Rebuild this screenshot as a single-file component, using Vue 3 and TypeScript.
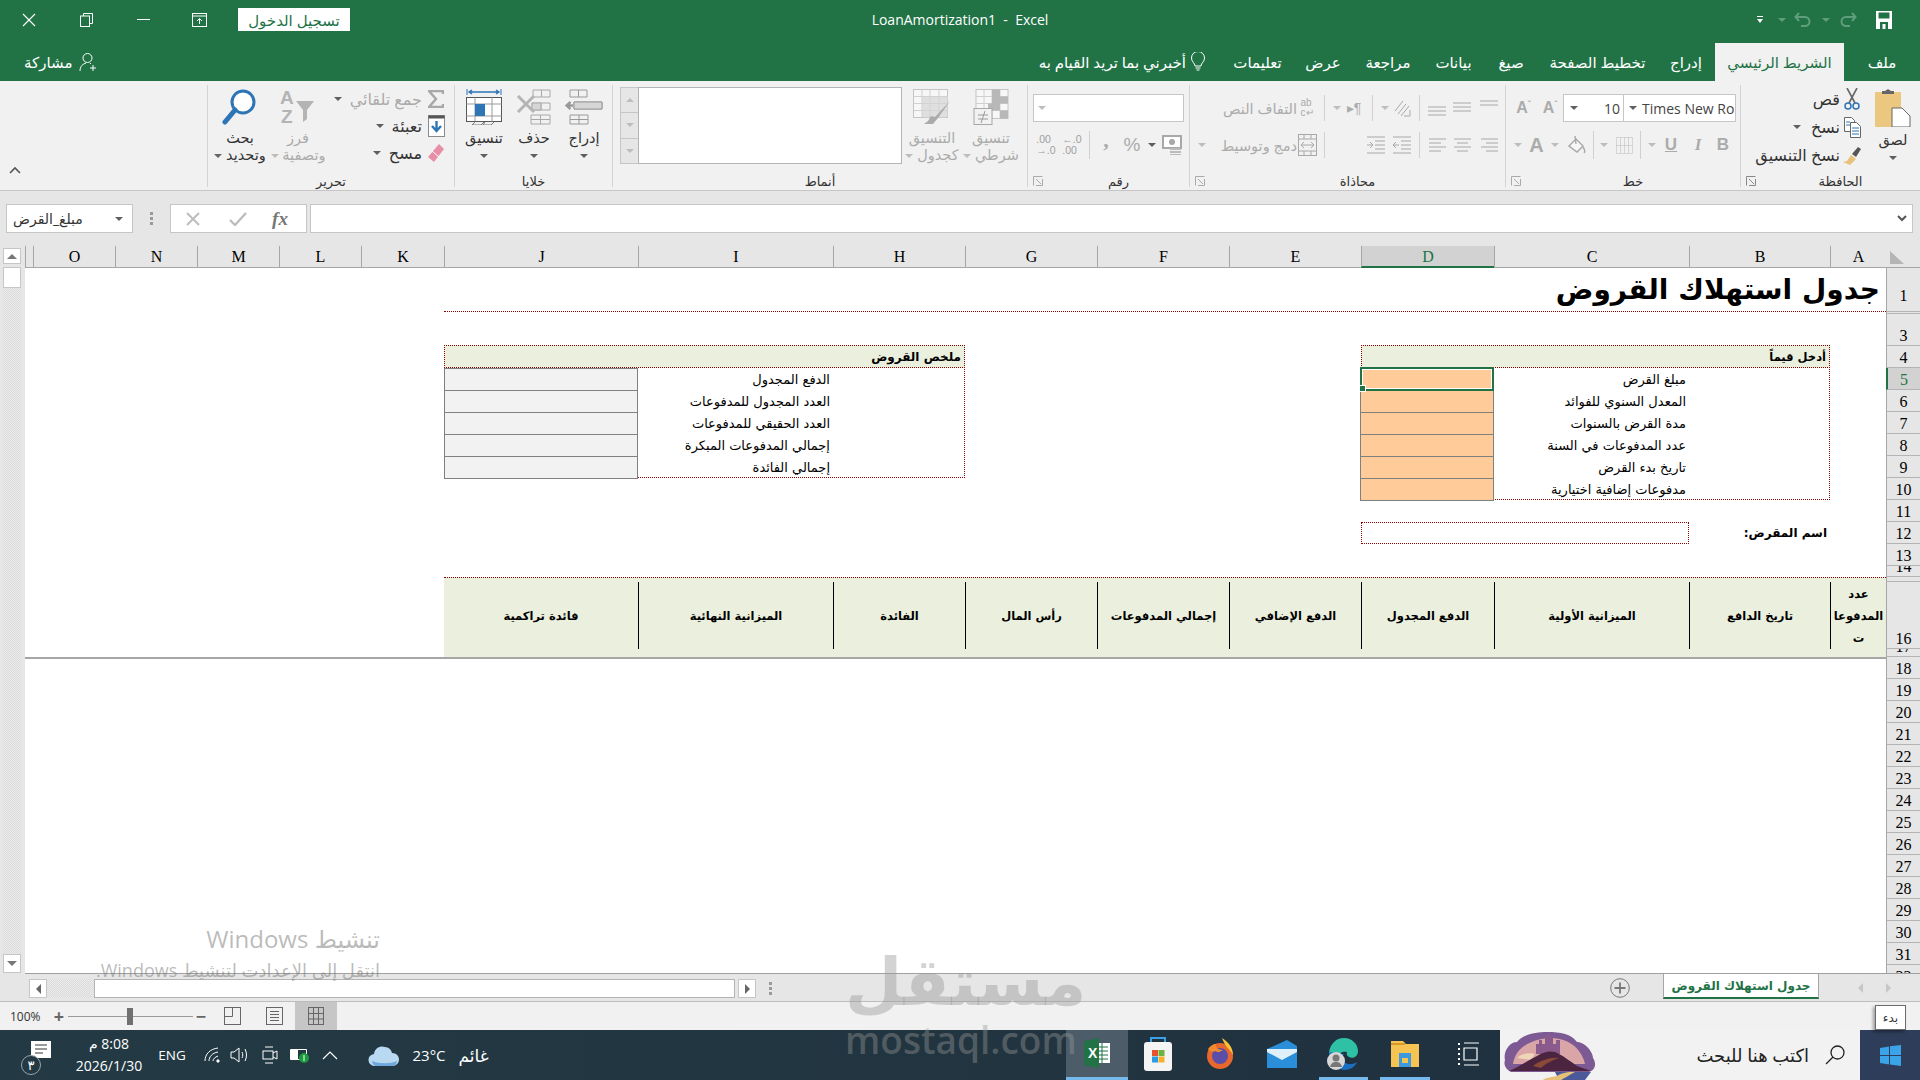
<script setup lang="ts">
interface Cell {
  text?: string;
  row: number;
  col: number;
  rows?: number;
  cols?: number;
  cls: string;
}

const colNames = ['A', 'B', 'C', 'D', 'E', 'F', 'G', 'H', 'I', 'J', 'K', 'L', 'M', 'N', 'O', ''];
const colWidths = [56, 141, 195, 133, 132, 132, 132, 132, 195, 194, 83, 82, 82, 82, 82, 8];
const rowHeights = [
  44, 2, 32, 22, 22, 22, 22, 22, 22, 22, 22, 22, 22, 11, 5, 67, 8, 22, 22, 22, 22, 22, 22, 22, 22,
  22, 22, 22, 22, 22, 22, 22,
];

const gridShape = {
  gridTemplateColumns: `34px ${colWidths.map((w) => w + 'px').join(' ')}`,
  gridTemplateRows: `22px ${rowHeights.map((h) => h + 'px').join(' ')}`,
};

// cells are given in sheet coordinates: A = 1, row 1 = 1
function place(row: number, col: number, rows = 1, cols = 1) {
  return { gridArea: `${row + 1} / ${col + 1} / span ${rows} / span ${cols}` };
}

const inputLabels = [
  'مبلغ القرض',
  'المعدل السنوي للفوائد',
  'مدة القرض بالسنوات',
  'عدد المدفوعات في السنة',
  'تاريخ بدء القرض',
  'مدفوعات إضافية اختيارية',
];
const summaryLabels = [
  'الدفع المجدول',
  'العدد المجدول للمدفوعات',
  'العدد الحقيقي للمدفوعات',
  'إجمالي المدفوعات المبكرة',
  'إجمالي الفائدة',
];
const tableHeads = [
  'عدد المدفوعا ت',
  'تاريخ الدافع',
  'الميزانية الأولية',
  'الدفع المجدول',
  'الدفع الإضافي',
  'إجمالي المدفوعات',
  'رأس المال',
  'الفائدة',
  'الميزانية النهائية',
  'فائدة تراكمية',
];

const cells: Cell[] = [
  { text: 'جدول استهلاك القروض', row: 1, col: 1, cols: 10, cls: 'sheet-title' },
  { row: 4, col: 2, rows: 7, cols: 3, cls: 'dotted-box' },
  { text: 'أدخل قيماً', row: 4, col: 2, cols: 3, cls: 'box-head' },
  ...inputLabels.flatMap((text, i) => [
    { text, row: 5 + i, col: 3, cls: 'label' },
    { row: 5 + i, col: 4, cls: 'input' },
  ]),
  { text: 'اسم المقرض:', row: 12, col: 2, cls: 'borrower' },
  { row: 12, col: 3, cols: 2, cls: 'dotted-cell' },
  { row: 4, col: 8, rows: 6, cols: 3, cls: 'dotted-box' },
  { text: 'ملخص القروض', row: 4, col: 8, cols: 3, cls: 'box-head summary-head' },
  ...summaryLabels.flatMap((text, i) => [
    { text, row: 5 + i, col: 9, cls: 'label' },
    { row: 5 + i, col: 10, cls: 'output' },
  ]),
  { row: 15, col: 1, rows: 3, cols: 10, cls: 'band' },
  ...tableHeads.map((text, i) => ({
    text,
    row: 16,
    col: i + 1,
    cls: i < 9 ? 'thead thead-line' : 'thead',
  })),
  { row: 17, col: 1, cols: 16, cls: 'freeze' },
  { row: 5, col: 4, cls: 'active-cell' },
];

const tabs = [
  { name: 'ملف', width: 76 },
  { name: 'الشريط الرئيسي', width: 129, active: true },
  { name: 'إدراج', width: 58 },
  { name: 'تخطيط الصفحة', width: 119 },
  { name: 'صيغ', width: 54 },
  { name: 'بيانات', width: 61 },
  { name: 'مراجعة', width: 70 },
  { name: 'عرض', width: 60 },
  { name: 'تعليمات', width: 71 },
];
</script>

<template>
  <div class="app">
    <header class="titlebar">
      <div class="win-left">
        <span class="win-btn">
          <svg width="14" height="14" viewBox="0 0 14 14"><path d="M1 1l12 12M13 1L1 13" stroke="#fff" stroke-width="1.1" /></svg>
        </span>
        <span class="win-btn">
          <svg width="13" height="14" viewBox="0 0 13 14" fill="none" stroke="#fff"><path d="M3.5 3V.5h9v10H10" /><rect x=".5" y="3" width="9" height="10.5" /></svg>
        </span>
        <span class="win-btn">
          <svg width="13" height="3" viewBox="0 0 13 3"><path d="M0 1.5h13" stroke="#fff" /></svg>
        </span>
        <span class="win-btn">
          <svg width="15" height="14" viewBox="0 0 15 14" fill="none" stroke="#fff"><rect x=".5" y=".5" width="14" height="13" /><path d="M.5 3h14M7.5 11V5.5M5 8l2.5-2.5L10 8" /></svg>
        </span>
        <button class="signin">تسجيل الدخول</button>
      </div>
      <div class="doc-title">LoanAmortization1&nbsp; - &nbsp;Excel</div>
      <div class="qat">
        <span class="qat-slot q24"><svg width="6" height="8" viewBox="0 0 6 8" fill="#fff"><path d="M0 0h6v1H0zM0 3h6L3 7z" /></svg></span>
        <span class="qat-slot q20"><i class="dd dd-green"></i></span>
        <span class="qat-slot q22">
          <svg width="18" height="18" viewBox="0 0 18 18" fill="none" stroke="#5f9d7d" stroke-width="2"><path d="M5 2L1.5 6 5 10M2 6h9a4.500 4.500 0 0 1 0 9H7" /></svg>
        </span>
        <span class="qat-slot q24"><i class="dd dd-green"></i></span>
        <span class="qat-slot q20">
          <svg width="18" height="18" viewBox="0 0 18 18" fill="none" stroke="#5f9d7d" stroke-width="2"><path d="M13 2l3.500 4L13 10M16 6H7a4.500 4.500 0 0 0 0 9h4" /></svg>
        </span>
        <span class="qat-slot q36">
          <svg width="16" height="18" viewBox="0 0 16 18"><path d="M0 0h16v18H0z" fill="#fff" /><path d="M2.500 1.500h11v6h-11z" fill="#217346" /><path d="M4 11h8v7H4z" fill="#217346" /><path d="M6.500 13h3v5h-3z" fill="#fff" /></svg>
        </span>
      </div>
    </header>

    <nav class="tabbar">
      <div class="share">
        <span>مشاركة</span>
        <svg width="20" height="20" viewBox="0 0 20 20" fill="none" stroke="#fff"><circle cx="8.500" cy="6" r="4.500" /><path d="M1 19c0-5 3-7 6-8M11 11l1 1M14 13v6M11 16h6" /></svg>
      </div>
      <div class="tab-space"></div>
      <div class="tellme">
        <span>أخبرني بما تريد القيام به</span>
        <svg width="16" height="20" viewBox="0 0 16 20" fill="none" stroke="#fff"><path d="M5 14c0-3-3.500-4-3.500-8a6.500 6.500 0 0 1 13 0c0 4-3.500 5-3.500 8zM5.500 16h5M6.500 18h3" /></svg>
      </div>
      <div class="tabs">
        <span
          v-for="tab in [...tabs].reverse()"
          :key="tab.name"
          class="tab"
          :class="{ 'tab-active': tab.active }"
          :style="{ width: tab.width + 'px' }"
          >{{ tab.name }}</span
        >
      </div>
    </nav>

    <section class="ribbon">
      <div class="collapse">
        <svg width="12" height="8" viewBox="0 0 12 8" fill="none" stroke="#555" stroke-width="1.600"><path d="M1 7l5-5 5 5" /></svg>
      </div>

      <!-- editing -->
      <div class="group g-edit">
        <div class="group-body edit-body">
          <div class="big w46">
            <svg width="36" height="36" viewBox="0 0 36 36"><circle cx="21" cy="13" r="11" fill="#fff" stroke="#2e75b6" stroke-width="3" /><path d="M13 21L3 33" stroke="#2e75b6" stroke-width="5" stroke-linecap="round" /></svg>
            <span class="lbl">بحث</span>
            <span class="lbl"><i class="dd"></i> وتحديد</span>
          </div>
          <div class="big w60 off">
            <svg width="36" height="36" viewBox="0 0 36 36"><text x="0" y="15" class="az">A</text><text x="1" y="34" class="az">Z</text><path d="M16 12h18l-7 9v9l-4 3V21z" fill="#b4b4b4" /></svg>
            <span class="lbl">فرز</span>
            <span class="lbl"><i class="dd dd-off"></i> وتصفية</span>
          </div>
          <div class="small-list">
            <div class="small off"><i class="dd dd-dark"></i><span>جمع تلقائي</span>
              <span class="small-ico"><svg width="16" height="18" viewBox="0 0 16 18"><path d="M15 4V1H1l7 8-7 8h14v-3" fill="none" stroke="#a8a8a8" stroke-width="2.400" /></svg></span>
            </div>
            <div class="small"><i class="dd dd-dark"></i><span>تعبئة</span>
              <span class="small-ico"><svg width="17" height="22" viewBox="0 0 17 22"><rect x=".5" y=".5" width="16" height="21" fill="#fff" stroke="#8a8a8a" /><path d="M.5 2h16" stroke="#555" stroke-width="3" /><path d="M8.500 6v9M4 11l4.500 5 4.500-5" fill="none" stroke="#2e75b6" stroke-width="2.400" /></svg></span>
            </div>
            <div class="small"><i class="dd dd-dark"></i><span>مسح</span>
              <span class="small-ico"><svg width="18" height="20" viewBox="0 0 18 20"><path d="M12 1l5 5L7 19l-6-5z" fill="#e88ea6" /><path d="M5 8l7 6" stroke="#fff" /></svg></span>
            </div>
          </div>
        </div>
        <div class="group-label"><span>تحرير</span></div>
      </div>

      <!-- cells -->
      <div class="group g-cells">
        <div class="group-body cells-body">
          <div class="big w50">
            <svg width="36" height="36" viewBox="0 0 36 36" fill="none"><path d="M1 0v6M35 0v6" stroke="#2e75b6" /><path d="M3 3h30M6 1L3 3l3 2M30 1l3 2-3 2" stroke="#2e75b6" stroke-width="1.400" /><rect x=".5" y="8.500" width="35" height="24" fill="#fff" stroke="#555" /><path d="M.5 15h35M.5 27h35M9 8.500v24M26 8.500v24" stroke="#9a9a9a" /><rect x="9" y="15" width="10" height="12" fill="#2e75b6" /><path d="M9 33l-3 3h9l3-3M19 33l-2 3h8l3-3" stroke="#777" /></svg>
            <span class="lbl">تنسيق</span>
            <span class="lbl"><i class="dd dd-dark"></i></span>
          </div>
          <div class="big w50">
            <svg width="36" height="36" viewBox="0 0 36 36" fill="none" stroke="#a8a8a8"><path d="M17 1h17v7H17zM25.500 1v7M16 14h18v7H16zM25 14v7M15 26h19v9H15zM15 30.500h19M24.500 26v9" /><path d="M16 14h9v7h-9z" fill="#d6d6d6" /><path d="M2 7l16 16M18 7L2 23" stroke="#b4b4b4" stroke-width="3" /></svg>
            <span class="lbl">حذف</span>
            <span class="lbl"><i class="dd dd-dark"></i></span>
          </div>
          <div class="big w50">
            <svg width="38" height="36" viewBox="0 0 38 36" fill="none" stroke="#9a9a9a"><path d="M5 1h17v7H5zM13.500 1v7M9 13h28v7H9zM23 13v7M5 26h18v9H5zM5 30.500h18M14 26v9" /><path d="M9 13h28v7H9z" fill="#d6d6d6" /><path d="M8 16.500H2M5.500 13L1.500 16.500 5.500 20" stroke="#9a9a9a" stroke-width="2.400" /></svg>
            <span class="lbl">إدراج</span>
            <span class="lbl"><i class="dd dd-dark"></i></span>
          </div>
        </div>
        <div class="group-label"><span>خلايا</span></div>
      </div>

      <!-- styles -->
      <div class="group g-styles">
        <div class="group-body styles-body">
          <div class="gal-scroll">
            <span><i class="dd dd-up"></i></span>
            <span><i class="dd dd-off"></i></span>
            <span><i class="dd dd-off"></i></span>
          </div>
          <div class="gallery"></div>
          <div class="big w60 off">
            <svg width="38" height="36" viewBox="0 0 38 36" fill="none"><rect x=".5" y=".5" width="34" height="28" fill="#f7f7f7" stroke="#c4c4c4" /><path d="M.5 7.500h34M.5 14.500h34M.5 21.500h34M9 .5v28M17 .5v28M26 .5v28" stroke="#d0d0d0" /><path d="M9 7.500h26v21H9z" fill="#d4d4d4" opacity=".7" /><path d="M37 12L22 28l-4-1-3 5-4 3h9l5-6z" fill="#ababab" /></svg>
            <span class="lbl">التنسيق</span>
            <span class="lbl"><i class="dd dd-off"></i> كجدول</span>
          </div>
          <div class="big w58 off">
            <svg width="36" height="36" viewBox="0 0 36 36" fill="none"><rect x="3" y=".5" width="32" height="29" fill="#f7f7f7" stroke="#c4c4c4" /><path d="M3 7.500h32M3 14.500h32M3 21.500h32M11 .5v29M19 .5v29M27 .5v29" stroke="#d0d0d0" /><path d="M19 .5h8v7h-8zM19 7.500h16v7H19zM15 14.500h12v7H15zM27 21.500h8v8h-8z" fill="#b8b8b8" /><rect x="1" y="19.500" width="18" height="16" fill="#f1f1f1" stroke="#a8a8a8" /><path d="M5 26h10M5 30h10M12 22l-4 12" stroke="#9a9a9a" /></svg>
            <span class="lbl">تنسيق</span>
            <span class="lbl"><i class="dd dd-off"></i> شرطي</span>
          </div>
        </div>
        <div class="group-label"><span>أنماط</span></div>
      </div>

      <!-- number -->
      <div class="group g-number">
        <div class="group-body">
          <div class="num-combo"><i class="dd dd-off"></i></div>
          <div class="row2 num-row off">
            <span class="tiny">.00<br />→.0</span>
            <span class="tiny">←.0<br />.00</span>
            <span class="sep sep-low"></span>
            <span class="comma">,</span>
            <span class="pct">%</span>
            <i class="dd dd-dark"></i>
            <svg width="20" height="20" viewBox="0 0 20 20"><rect x="1" y="1" width="18" height="12" fill="#fff" stroke="#a8a8a8" stroke-width="2" /><circle cx="10" cy="7" r="3" fill="#a8a8a8" /><path d="M8 14h11M8 17h11M8 20h11" stroke="#bbb" stroke-width="2" /></svg>
          </div>
        </div>
        <div class="group-label launch">
          <svg class="launcher" width="10" height="10" viewBox="0 0 10 10" fill="none" stroke="#aaa"><path d="M.5 9.500v-9h9M9.500 3v6.500H3M3 3l5 5" /></svg>
          <span>رقم</span>
        </div>
      </div>

      <!-- alignment -->
      <div class="group g-align">
        <div class="group-body">
          <div class="al-row1 off">
            <span class="al-text">التفاف النص</span>
            <span class="wrap-ico">ab<br />c↵</span>
            <span class="sep"></span>
            <i class="dd dd-off"></i>
            <span class="para">▸¶</span>
            <span class="sep"></span>
            <i class="dd dd-off"></i>
            <svg width="18" height="18" viewBox="0 0 18 18" fill="none" stroke="#a8a8a8"><path d="M2 12L10 2M5 15l8-10M8 17l8-10M11 17h6v-6" /></svg>
            <span class="sep"></span>
            <svg width="18" height="16" viewBox="0 0 18 16" stroke="#a8a8a8"><path d="M0 7h18M0 11h18M0 15h18" /></svg>
            <svg width="18" height="16" viewBox="0 0 18 16" stroke="#a8a8a8"><path d="M0 3h18M0 7h18M0 11h18" /></svg>
            <svg width="18" height="16" viewBox="0 0 18 16" stroke="#a8a8a8"><path d="M0 1h18M0 5h18" /></svg>
          </div>
          <div class="al-row2 off">
            <i class="dd dd-off"></i>
            <span class="al-text">دمج وتوسيط</span>
            <svg width="19" height="22" viewBox="0 0 19 22" fill="none" stroke="#a8a8a8"><rect x=".5" y=".5" width="18" height="21" /><path d="M.5 5h18M.5 17h18M6 .5V5M13 .5V5M6 17v4.500M13 17v4.500M3 11h13M6 8l-3 3 3 3M13 8l3 3-3 3" /></svg>
            <span class="sep"></span>
            <span></span>
            <svg width="18" height="18" viewBox="0 0 18 18" fill="none" stroke="#a8a8a8"><path d="M0 1h18M8 5h10M8 9h10M8 13h10M0 17h18M0 9h6M3 6l3 3-3 3" /></svg>
            <span></span>
            <svg width="18" height="18" viewBox="0 0 18 18" fill="none" stroke="#a8a8a8"><path d="M0 1h18M8 5h10M8 9h10M8 13h10M0 17h18M6 9H0M3 6L0 9l3 3" /></svg>
            <span class="sep"></span>
            <svg width="17" height="14" viewBox="0 0 17 14" stroke="#a8a8a8"><path d="M0 1h17M0 5h12M0 9h17M0 13h12" /></svg>
            <svg width="17" height="14" viewBox="0 0 17 14" stroke="#a8a8a8"><path d="M0 1h17M3 5h11M0 9h17M3 13h11" /></svg>
            <svg width="17" height="14" viewBox="0 0 17 14" stroke="#a8a8a8"><path d="M0 1h17M5 5h12M0 9h17M5 13h12" /></svg>
          </div>
        </div>
        <div class="group-label launch">
          <svg class="launcher" width="10" height="10" viewBox="0 0 10 10" fill="none" stroke="#aaa"><path d="M.5 9.500v-9h9M9.500 3v6.500H3M3 3l5 5" /></svg>
          <span>محاذاة</span>
        </div>
      </div>

      <!-- font -->
      <div class="group g-font">
        <div class="group-body">
          <div class="font-row1">
            <span class="aa">A<sup>ˇ</sup></span>
            <span class="aa">A<sup>ˆ</sup></span>
            <div class="font-combo">
              <div class="fc-size"><i class="dd dd-dark"></i><span>10</span></div>
              <div class="fc-name"><i class="dd dd-dark"></i><span>Times New Ro</span></div>
            </div>
          </div>
          <div class="font-row2 off">
            <i class="dd dd-off"></i>
            <span class="fa">A</span>
            <i class="dd dd-off"></i>
            <svg width="18" height="20" viewBox="0 0 18 20" fill="#f6f6f6" stroke="#a8a8a8" stroke-width="1.400"><path d="M1 11l7-7 7 7-6 6zM7 1l1 8" /><path d="M15 12c2 3 2 5 1 6" /></svg>
            <span class="sep sep-low"></span>
            <i class="dd dd-off"></i>
            <svg width="17" height="17" viewBox="0 0 17 17" fill="none" stroke="#b8b8b8" stroke-dasharray="1 1"><path d="M.5.500h16v16H.5zM.5 8.500h16M8.500.500v16M4.500.500v16M12.500.500v16" /></svg>
            <span class="sep sep-low"></span>
            <i class="dd dd-off"></i>
            <span class="fmt fmt-u">U</span>
            <span class="fmt fmt-i">I</span>
            <span class="fmt">B</span>
          </div>
        </div>
        <div class="group-label launch">
          <svg class="launcher" width="10" height="10" viewBox="0 0 10 10" fill="none" stroke="#aaa"><path d="M.5 9.500v-9h9M9.500 3v6.500H3M3 3l5 5" /></svg>
          <span>خط</span>
        </div>
      </div>

      <!-- clipboard -->
      <div class="group g-clip">
        <div class="group-body clip-body">
          <div class="small-list clip-list">
            <div class="small"><span>قص</span>
              <span class="small-ico clip-ico"><svg width="16" height="22" viewBox="0 0 16 22" fill="none"><path d="M3 0l8 15M13 0L5 15" stroke="#666" stroke-width="1.600" /><circle cx="4" cy="18" r="3" stroke="#2e75b6" stroke-width="1.500" /><circle cx="12" cy="18" r="3" stroke="#2e75b6" stroke-width="1.500" /></svg></span>
            </div>
            <div class="small"><i class="dd dd-dark"></i><span>نسخ</span>
              <span class="small-ico clip-ico"><svg width="17" height="21" viewBox="0 0 17 21" fill="#fff" stroke="#666"><path d="M.5.500h7l3 3v11H.5z" /><path d="M6.500 5.500h6l4 4v11h-10z" /><path d="M8 11h7M8 14h7M8 17h7M2 5h4M2 8h4" stroke="#2e75b6" /></svg></span>
            </div>
            <div class="small"><span>نسخ التنسيق</span>
              <span class="small-ico clip-ico"><svg width="18" height="19" viewBox="0 0 18 19"><path d="M8 9l5 4-6 6-7-3 4-1z" fill="#e8c27a" /><path d="M9 8l6-7 3 2-5 8z" fill="#555" /></svg></span>
            </div>
          </div>
          <div class="big w54">
            <svg width="36" height="38" viewBox="0 0 36 38"><rect x="0" y="3" width="26" height="35" rx="1" fill="#ebc77f" /><path d="M7 5V2h3l3-2 3 2h3v3z" fill="#666" /><path d="M17 19h10l8 8v11H17z" fill="#fff" stroke="#666" /></svg>
            <span class="lbl">لصق</span>
            <span class="lbl"><i class="dd dd-dark"></i></span>
          </div>
        </div>
        <div class="group-label launch">
          <svg class="launcher" width="10" height="10" viewBox="0 0 10 10" fill="none" stroke="#888"><path d="M.5 9.500v-9h9M9.500 3v6.500H3M3 3l5 5" /></svg>
          <span>الحافظة</span>
        </div>
      </div>
    </section>

    <div class="formula-bar">
      <div class="name-box"><span>مبلغ_القرض</span><i class="dd dd-dark"></i></div>
      <div class="fb-dots"><b></b><b></b><b></b></div>
      <div class="fb-tools">
        <svg width="14" height="14" viewBox="0 0 14 14"><path d="M1 1l12 12M13 1L1 13" stroke="#bdbdbd" stroke-width="2" /></svg>
        <svg width="18" height="14" viewBox="0 0 18 14" fill="none"><path d="M1 8l5 5L17 1" stroke="#bdbdbd" stroke-width="2.400" /></svg>
        <span class="fx">fx</span>
      </div>
      <div class="fb-input">
        <svg width="10" height="7" viewBox="0 0 10 7" fill="none" stroke="#555" stroke-width="2"><path d="M1 1l4 4 4-4" /></svg>
      </div>
    </div>

    <div class="sheet-area">
      <aside class="vscroll">
        <span class="sc-btn"><i class="dd dd-up-dark"></i></span>
        <span class="sc-thumb"></span>
        <span class="sc-track"></span>
        <span class="sc-btn sc-down"><i class="dd dd-big"></i></span>
      </aside>
      <div class="sheet" :style="gridShape">
        <div class="corner" :style="place(0, 0)"><span></span></div>
        <div
          v-for="(name, i) in colNames"
          :key="'col' + i"
          class="col-head"
          :class="{ 'head-on': name === 'D' }"
          :style="place(0, i + 1)"
        >
          {{ name }}
        </div>
        <div
          v-for="(h, i) in rowHeights"
          :key="'row' + i"
          class="row-head"
          :class="{ 'row-on': i === 4, 'row-first': i === 0 }"
          :style="place(i + 1, 0)"
        >
          {{ i + 1 }}
        </div>
        <div v-for="(cell, i) in cells" :key="i" :class="cell.cls" :style="place(cell.row, cell.col, cell.rows, cell.cols)">
          <span v-if="cell.text">{{ cell.text }}</span>
        </div>
      </div>
    </div>

    <div class="hscroll">
      <span class="hs-btn hs-prev"><i class="tri-l"></i></span>
      <span class="hs-track"></span>
      <span class="hs-thumb"></span>
      <span class="hs-btn hs-next"><i class="tri-r"></i></span>
      <div class="fb-dots hs-dots"><b></b><b></b><b></b></div>
      <div class="hs-plus">
        <svg width="20" height="20" viewBox="0 0 20 20" fill="none" stroke="#777"><circle cx="10" cy="10" r="9.300" /><path d="M10 4.500v11M4.500 10h11" stroke-width="1.800" /></svg>
      </div>
      <div class="sheet-tab">جدول استهلاك القروض</div>
      <div class="tab-nav"><i class="tri-l tri-off"></i><i class="tri-r tri-off"></i></div>
    </div>

    <footer class="status">
      <span class="zoom-pct">100%</span>
      <span class="zoom-sign">+</span>
      <span class="zoom-slider"><i></i></span>
      <span class="zoom-sign">−</span>
      <span class="view-btn view-first">
        <svg width="17" height="18" viewBox="0 0 17 18" fill="none" stroke="#666"><rect x=".5" y=".5" width="16" height="17" /><path d="M8.500.500v9H.5" /></svg>
      </span>
      <span class="view-btn">
        <svg width="17" height="18" viewBox="0 0 17 18" fill="none" stroke="#666"><rect x=".5" y=".5" width="16" height="17" /><path d="M4 4.500h9M4 7.500h9M4 10.500h9M4 13.500h9" /></svg>
      </span>
      <span class="view-btn view-on">
        <svg width="16" height="18" viewBox="0 0 16 18" fill="none" stroke="#666"><rect x=".5" y=".5" width="15" height="17" /><path d="M5.500.500v17M10.500.500v17M.5 6.500h15M.5 12h15" /></svg>
      </span>
    </footer>

    <footer class="taskbar">
      <div class="tb-slot notif">
        <svg width="20" height="17" viewBox="0 0 20 17"><path d="M0 0h20v17H0z" fill="#fff" /><path d="M4 4h12M4 8h12M4 12h8" stroke="#333" /></svg>
        <span class="notif-badge">٣</span>
      </div>
      <div class="tb-slot clock">
        <span dir="rtl">8:08 م</span>
        <span dir="ltr">2026/1/30</span>
      </div>
      <div class="tb-slot eng">ENG</div>
      <div class="tb-slot tray">
        <svg width="16" height="16" viewBox="0 0 16 16" fill="none" stroke="#fff"><path d="M1 14C1 7 6 2 14 1M5 14c0-4 3-8 9-9M9 14c0-2 2-4 5-5" /><circle cx="14" cy="14" r="1.200" fill="#fff" /></svg>
      </div>
      <div class="tb-slot tray tray30">
        <svg width="20" height="18" viewBox="0 0 20 18" fill="none" stroke="#fff"><path d="M1 6h3l5-4v14l-5-4H1zM12 6c1 2 1 4 0 6M15 3c2 4 2 8 0 12" /></svg>
      </div>
      <div class="tb-slot tray tray30">
        <svg width="16" height="20" viewBox="0 0 16 20" fill="none" stroke="#fff"><rect x="1" y="6" width="10" height="8" /><path d="M11 8l4-2v8l-4-2M3 2h8M3 18h8" /></svg>
      </div>
      <div class="tb-slot tray tray30">
        <svg width="20" height="18" viewBox="0 0 20 18"><path d="M.5 3.500h16v10H.5z" fill="none" stroke="#fff" /><path d="M1 4h7v9H1z" fill="#fff" /><circle cx="14" cy="12" r="5" fill="#1a9a3c" /><path d="M14 9v6" stroke="#fff" /></svg>
      </div>
      <div class="tb-slot tray tray30">
        <svg width="16" height="9" viewBox="0 0 16 9" fill="none" stroke="#fff" stroke-width="1.200"><path d="M1 8l7-7 7 7" /></svg>
      </div>
      <div class="tb-slot weather">
        <svg width="32" height="22" viewBox="0 0 32 22"><path d="M7 22a6 6 0 0 1-1-12 8 8 0 0 1 11-7 7 7 0 0 1 7 6 6.500 6.500 0 0 1 1 13z" fill="#b9d8f2" /><path d="M7 22a6 6 0 0 1-3-5c8 3 18 3 25 0a6 6 0 0 1-4 5z" fill="#6fa8dc" /></svg>
      </div>
      <div class="tb-slot temp">23°C</div>
      <div class="tb-slot cond">غائم</div>
      <div class="tb-space"></div>
      <div class="app-ico app-on">
        <svg width="26" height="30" viewBox="0 0 26 30"><rect x="11" y="5" width="15" height="20" fill="#fff" /><path d="M14 9h10M14 13h10M14 17h10M14 21h10M18 5v20" stroke="#217346" /><path d="M0 3l15-3v30L0 27z" fill="#217346" /><text x="4" y="20" class="xl">X</text></svg>
      </div>
      <div class="app-ico">
        <svg width="30" height="36" viewBox="0 0 30 36"><path d="M8 8V2h14v6" fill="none" stroke="#3aa0e8" stroke-width="2" /><rect x="1" y="6" width="28" height="29" rx="3" fill="#f4f4f4" /><path d="M9 14h6v6H9z" fill="#e5522c" /><path d="M15.500 14h6v6h-6z" fill="#6cb33f" /><path d="M9 20.500h6v6H9z" fill="#2a9be0" /><path d="M15.500 20.500h6v6h-6z" fill="#f6b02c" /></svg>
      </div>
      <div class="app-ico">
        <svg width="30" height="32" viewBox="0 0 30 32"><circle cx="15" cy="18" r="13" fill="#e8672c" /><circle cx="15" cy="18" r="8" fill="#5b4ea8" /><path d="M17 0c6 4 11 9 11 17-3-6-8-8-11-17z" fill="#f8c33a" /><path d="M3 11c2-3 5-5 8-5-1 3 2 6 7 6-3 2-6 3-7 1-3 1-6 1-8-2z" fill="#f28b2e" /></svg>
      </div>
      <div class="app-ico">
        <svg width="30" height="28" viewBox="0 0 30 28"><path d="M0 9L20 0l10 6v22H0z" fill="#2a8fd8" /><path d="M0 9h30v3L15 20 0 12z" fill="#dff0fb" /></svg>
      </div>
      <div class="app-ico app-line">
        <svg width="32" height="34" viewBox="0 0 32 34"><path d="M2 16C3 7 9 1 17 1c8 0 14 6 14 13 0 6-5 8-9 6-2-1-3-3-2-5-3-1-8 0-9 5-2-3-6-4-9-4z" fill="#2fc1a5" /><path d="M2 16c0 8 5 16 15 17 6 0 11-3 13-8-6 4-13 2-15-2 0-3 1-5 2-6-5 0-13-3-15-1z" fill="#1b6fc0" /><circle cx="9" cy="24" r="9" fill="#d8d8d8" /><circle cx="9" cy="21" r="3.500" fill="#777" /><path d="M3 30c1-4 3-5 6-5s5 1 6 5z" fill="#777" /></svg>
      </div>
      <div class="app-ico app-line">
        <svg width="28" height="26" viewBox="0 0 28 26"><path d="M0 0h12l3 3h13v23H0z" fill="#f6c453" /><path d="M0 3h14" stroke="#d99a2b" stroke-width="2" /><path d="M8 12h12v14H8z" fill="#3b9ae0" /><path d="M11 17h6v5h-6z" fill="#f6c453" /></svg>
      </div>
      <div class="app-ico task-view">
        <svg width="22" height="24" viewBox="0 0 22 24" fill="none" stroke="#fff" stroke-width="1.200"><path d="M7 1h15M7 23h15M7 6h13v12H7z" /><path d="M2 1v2M2 6v2M2 11v2M2 16v2M2 21v2" stroke-width="2" /></svg>
      </div>
      <div class="search">
        <svg class="hill" width="94" height="50" viewBox="0 0 94 50">
          <path d="M2 30C0 22 6 12 14 12 20 4 34 2 44 2c14 0 24 2 30 10 8 0 16 10 16 16 4 6 2 12-4 14H8C4 40 0 36 2 30z" fill="#7d5a94" />
          <path d="M10 34C12 20 24 10 46 8c20 0 32 10 36 26z" fill="#d9a5a6" />
          <path d="M14 28c4-4 12-6 18-4l-4 6z" fill="#f0d6b8" />
          <path d="M33 24V14h3v-4h3v4h3V6h3V4h2v2h3v8h3v-4h4v14z" fill="#8a5a8c" />
          <path d="M6 41c10-4 18-10 28-15 8-5 16-6 22-2 6 3 12 8 18 12l14 5z" fill="#4b2440" />
          <path d="M30 36c8-6 18-9 26-8-6 2-14 6-18 10z" fill="#8a4a38" />
          <path d="M52 42h36l-6 8H56z" fill="#4a5a98" />
          <path d="M66 42c-8 1-10 3-12 4-6 1-12 2-14 4h18c4-2 8-5 14-8z" fill="#e6c078" />
        </svg>
        <span class="search-text">اكتب هنا للبحث</span>
        <svg width="20" height="20" viewBox="0 0 20 20" fill="none" stroke="#222" stroke-width="1.300"><circle cx="12.500" cy="7.500" r="6.500" /><path d="M8 12l-7 7" /></svg>
      </div>
      <div class="start">
        <svg width="21" height="21" viewBox="0 0 21 21" fill="#3ba3e8"><path d="M0 3l9-1.500V10H0zM10 1.300L21 0v10H10zM0 11h9v8.500L0 18zM10 11h11v10l-11-1.500z" /></svg>
      </div>
    </footer>

    <!-- overlays -->
    <div class="start-tip" dir="rtl">بدء</div>
    <div class="activate" dir="rtl">
      <div class="act-1">تنشيط Windows</div>
      <div class="act-2">انتقل إلى الإعدادت لتنشيط Windows.</div>
    </div>
    <div class="mostaql">
      <div class="mq-logo">مستقل</div>
      <div class="mq-url">mostaql.com</div>
    </div>
  </div>
</template>

<style>
html,
body {
  margin: 0;
  background: #fff;
}
</style>

<style scoped>
.app {
  position: relative;
  width: 1920px;
  height: 1080px;
  overflow: hidden;
  display: flex;
  flex-direction: column;
  font-family: 'Open Sans', 'DejaVu Sans', sans-serif;
  font-size: 14.5px;
  color: #333;
}

/* title bar */
.titlebar {
  height: 43px;
  background: #217346;
  display: grid;
  grid-template-columns: 1fr auto 1fr;
  align-items: center;
  flex: none;
  padding-bottom: 4px;
  box-sizing: border-box;
}
.win-left {
  display: flex;
  align-items: center;
}
.win-btn {
  width: 57px;
  display: flex;
  justify-content: center;
}
.win-btn:first-child {
  width: 58px;
}
.win-btn:nth-child(4) {
  width: 54px;
}
.signin {
  margin-left: 12px;
  width: 112px;
  height: 23px;
  border: 0;
  padding: 0;
  background: #fff;
  color: #217346;
  font-family: inherit;
  font-size: 15px;
}
.doc-title {
  color: #fff;
  font-size: 14px;
}
.qat {
  display: flex;
  justify-content: flex-end;
  align-items: center;
  padding-right: 18px;
}
.qat-slot {
  display: flex;
  justify-content: center;
  align-items: center;
}
.q20 {
  width: 20px;
}
.q22 {
  width: 22px;
}
.q24 {
  width: 24px;
}
.q36 {
  width: 36px;
  margin-left: 8px;
}

/* tabs */
.tabbar {
  height: 38px;
  background: #217346;
  display: flex;
  align-items: stretch;
  color: #fff;
  flex: none;
  font-size: 15px;
}
.share {
  display: flex;
  align-items: center;
  gap: 7px;
  padding-left: 24px;
}
.tab-space {
  flex: 1;
}
.tellme {
  display: flex;
  align-items: center;
  gap: 4px;
  margin-right: 16px;
}
.tabs {
  display: flex;
}
.tab {
  display: flex;
  align-items: center;
  justify-content: center;
}
.tab-active {
  background: #f1f1f1;
  color: #217346;
}

/* ribbon */
.ribbon {
  height: 110px;
  flex: none;
  background: #f1f1f1;
  border-bottom: 1px solid #c6c6c6;
  box-sizing: border-box;
  display: flex;
}
.collapse {
  width: 207px;
  display: flex;
  align-items: flex-end;
  padding: 0 0 16px 9px;
  box-sizing: border-box;
}
.group {
  margin-top: 4px;
  height: 102px;
  border-left: 1px solid #d4d4d4;
  box-sizing: border-box;
  display: flex;
  flex-direction: column;
}
.g-edit {
  width: 247px;
}
.g-cells {
  width: 158px;
}
.g-styles {
  width: 415px;
}
.g-number {
  width: 162px;
}
.g-align {
  width: 316px;
}
.g-font {
  width: 235px;
}
.g-clip {
  width: 180px;
  border-left-color: #d4d4d4;
}
.group-body {
  flex: 1;
  min-height: 0;
}
.group-label {
  height: 13px;
  display: flex;
  align-items: center;
  justify-content: center;
  font-size: 13px;
  color: #333;
}
.launch span {
  flex: 1;
  text-align: center;
}
.launcher {
  margin-left: 5px;
  margin-right: 5px;
}
.big {
  display: flex;
  flex-direction: column;
  align-items: center;
  padding-top: 4px;
  box-sizing: border-box;
}
.big svg {
  margin-bottom: 4px;
  flex: none;
}
.big .lbl {
  line-height: 17px;
  height: 17px;
  white-space: nowrap;
}
.w46 {
  width: 46px;
}
.w50 {
  width: 50px;
}
.w54 {
  width: 54px;
}
.w58 {
  width: 58px;
}
.w60 {
  width: 60px;
}
.off,
.off .lbl,
.small.off {
  color: #ababab;
}
.small-list {
  flex: 1;
  padding-top: 0;
  font-size: 16px;
}
.small {
  height: 27px;
  display: flex;
  justify-content: flex-end;
  align-items: center;
  gap: 8px;
  white-space: nowrap;
}
.small-ico {
  width: 24px;
  margin: 0 6px 0 -6px;
  display: flex;
  justify-content: center;
}
.edit-body {
  display: flex;
  padding-left: 9px;
}
.edit-body .w60 {
  margin-left: 5px;
}
.cells-body {
  display: flex;
  padding-left: 4px;
}
.styles-body {
  display: flex;
  padding-left: 7px;
}
.gal-scroll {
  margin-top: 2px;
  width: 18px;
  height: 77px;
  box-sizing: border-box;
  border: 1px solid #c6c6c6;
  border-right: 0;
  background: #e6e6e6;
  display: flex;
  flex-direction: column;
}
.gal-scroll span {
  flex: 1;
  display: flex;
  align-items: center;
  justify-content: center;
  border-bottom: 1px solid #c6c6c6;
}
.gal-scroll span:last-child {
  border-bottom: 0;
}
.gallery {
  margin-top: 2px;
  width: 264px;
  height: 77px;
  box-sizing: border-box;
  background: #fff;
  border: 1px solid #b4b4b4;
}
.num-combo {
  margin: 9px 5px 0 5px;
  height: 28px;
  box-sizing: border-box;
  background: #fff;
  border: 1px solid #c6c6c6;
  display: flex;
  align-items: center;
  padding-left: 4px;
}
.row2 {
  display: grid;
  align-items: center;
  justify-items: center;
}
.num-row {
  margin-top: 9px;
  height: 28px;
  padding-left: 5px;
  grid-template-columns: 26px 26px 9px 24px 28px 12px 27px;
}
.tiny {
  font-size: 10.5px;
  line-height: 11px;
  font-family: 'Liberation Sans', sans-serif;
  color: #a0a0a0;
}
.comma {
  font-size: 22px;
  font-weight: bold;
  line-height: 12px;
  margin-bottom: 10px;
  font-family: 'Liberation Serif', serif;
}
.pct {
  font-size: 19px;
  line-height: 20px;
  font-family: 'Liberation Sans', sans-serif;
}
.sep {
  display: block;
  width: 1px;
  height: 26px;
  background: #d0d0d0;
}
.sep-low {
  height: 28px;
}
.al-row1,
.al-row2 {
  display: grid;
  align-items: center;
  justify-items: center;
  height: 28px;
}
.al-row1 {
  margin-top: 9px;
  grid-template-columns: 107px 20px 15px 9px 26px 11px 14px 20px 14px 22px 28px 26px;
}
.al-row2 {
  margin-top: 9px;
  grid-template-columns: 23px 84px 20px 15px 34px 20px 6px 20px 14px 22px 28px 26px;
}
.al-text {
  justify-self: end;
  white-space: nowrap;
}
.wrap-ico {
  font-size: 10px;
  line-height: 10px;
  font-family: 'Liberation Sans', sans-serif;
}
.para {
  font-size: 14px;
  font-family: 'Liberation Sans', sans-serif;
}
.font-row1 {
  margin-top: 9px;
  height: 28px;
  padding-left: 4px;
  display: grid;
  grid-template-columns: 27px 26px 173px;
  align-items: center;
  justify-items: center;
}
.aa {
  color: #ababab;
  font-size: 16px;
  font-family: 'Liberation Sans', sans-serif;
  font-weight: bold;
  line-height: 18px;
}
.aa sup {
  font-size: 9px;
  line-height: 0;
}
.font-combo {
  width: 173px;
  height: 28px;
  box-sizing: border-box;
  background: #fff;
  border: 1px solid #c6c6c6;
  display: flex;
  font-size: 14px;
  color: #444;
}
.fc-size {
  width: 60px;
  border-right: 1px solid #c6c6c6;
  display: flex;
  justify-content: space-between;
  align-items: center;
  padding: 0 3px 0 6px;
  box-sizing: border-box;
}
.fc-name {
  flex: 1;
  display: flex;
  align-items: center;
  gap: 5px;
  padding-left: 5px;
  white-space: nowrap;
  overflow: hidden;
}
.font-row2 {
  margin-top: 9px;
  height: 28px;
  padding-left: 4px;
  display: grid;
  grid-template-columns: 16px 21px 16px 28px 4px 18px 22px 11px 11px 28px 26px 24px;
  align-items: center;
  justify-items: center;
  font-family: 'Liberation Sans', sans-serif;
  color: #ababab;
}
.fa {
  font-size: 20px;
  font-weight: bold;
}
.fmt {
  font-size: 17px;
  font-weight: bold;
}
.fmt-u {
  text-decoration: underline;
}
.fmt-i {
  font-style: italic;
  font-family: 'Liberation Serif', serif;
}
.clip-body {
  display: flex;
}
.clip-list {
  padding-right: 4px;
}
.clip-list .small {
  height: 28px;
  gap: 10px;
}
.clip-ico {
  width: 20px;
  margin: 0 0 0 -8px;
}

/* dropdown arrows */
.dd {
  display: inline-block;
  width: 0;
  height: 0;
  border-left: 4px solid transparent;
  border-right: 4px solid transparent;
  border-top: 4px solid #666;
  vertical-align: middle;
}
.dd-off {
  border-top-color: #bdbdbd;
}
.dd-dark {
  border-top-color: #5f5f5f;
}
.dd-green {
  border-top-color: #5f9d7d;
}
.dd-up {
  border-top: 0;
  border-bottom: 4px solid #bdbdbd;
}
.dd-up-dark {
  border-top: 0;
  border-bottom: 5px solid #777;
  border-left-width: 5px;
  border-right-width: 5px;
}
.dd-big {
  border-top-width: 5px;
  border-left-width: 5px;
  border-right-width: 5px;
  border-top-color: #777;
}

/* formula bar */
.formula-bar {
  height: 55px;
  flex: none;
  box-sizing: border-box;
  background: #e6e6e6;
  padding: 13px 7px 13px 6px;
  display: flex;
  align-items: stretch;
}
.name-box {
  width: 127px;
  box-sizing: border-box;
  background: #fff;
  border: 1px solid #c6c6c6;
  display: flex;
  align-items: center;
  justify-content: space-between;
  padding: 0 9px 0 6px;
  font-size: 14px;
}
.fb-dots {
  width: 37px;
  display: flex;
  flex-direction: column;
  align-items: center;
  justify-content: center;
  gap: 2px;
}
.fb-dots b {
  width: 3px;
  height: 3px;
  background: #9a9a9a;
}
.fb-tools {
  width: 137px;
  box-sizing: border-box;
  background: #fff;
  border: 1px solid #c6c6c6;
  display: grid;
  grid-template-columns: 44px 46px 38px;
  align-items: center;
  justify-items: center;
}
.fx {
  font-family: 'Liberation Serif', serif;
  font-style: italic;
  font-size: 19px;
  color: #777;
  font-weight: bold;
  line-height: 20px;
}
.fb-input {
  flex: 1;
  margin-left: 3px;
  box-sizing: border-box;
  background: #fff;
  border: 1px solid #c6c6c6;
  display: flex;
  align-items: center;
  justify-content: flex-end;
  padding-right: 5px;
}

/* sheet */
.sheet-area {
  height: 728px;
  flex: none;
  display: flex;
  background: #e6e6e6;
}
.vscroll {
  width: 25px;
  flex: none;
  box-sizing: border-box;
  padding: 2px 4px 1px 3px;
  display: flex;
  flex-direction: column;
}
.sc-btn {
  height: 16px;
  flex: none;
  box-sizing: border-box;
  background: #fff;
  border: 1px solid #c6c6c6;
  display: flex;
  align-items: center;
  justify-content: center;
}
.sc-down {
  height: 19px;
}
.sc-thumb {
  margin-top: 3px;
  height: 21px;
  flex: none;
  box-sizing: border-box;
  background: #fff;
  border: 1px solid #c6c6c6;
}
.sc-track {
  flex: 1;
  background: repeating-conic-gradient(#dadada 0 25%, #ececec 0 50%) 0 0 / 2px 2px;
}
.sheet {
  width: 1895px;
  height: 728px;
  overflow: hidden;
  display: grid;
  direction: rtl;
  background: #fff;
  border-bottom: 1px solid #a0a0a0;
  box-sizing: border-box;
  font-family: 'Liberation Serif', 'DejaVu Sans', serif;
  color: #000;
}
.corner {
  background: #e6e6e6;
  border-bottom: 1px solid #a6a6a6;
  display: flex;
  justify-content: flex-start;
  padding: 5px 16px 0 0;
  box-sizing: border-box;
}
.corner span {
  width: 14px;
  height: 13px;
  background: #b5b5b5;
  clip-path: polygon(0 0, 100% 100%, 0 100%);
}
.col-head {
  background: #e6e6e6;
  border-left: 1px solid #a6a6a6;
  border-bottom: 1px solid #a6a6a6;
  box-sizing: border-box;
  text-align: center;
  font-size: 16px;
  padding-top: 1px;
  line-height: 20px;
}
.head-on {
  background: #d2d2d2;
  color: #217346;
  border-bottom: 2px solid #217346;
}
.row-head {
  background: #e6e6e6;
  border-left: 1px solid #a6a6a6;
  border-bottom: 1px solid #b4b4b4;
  box-sizing: border-box;
  overflow: hidden;
  display: flex;
  align-items: flex-end;
  justify-content: center;
  font-size: 16px;
  line-height: 18px;
  min-height: 0;
}
.row-first {
  padding-bottom: 6px;
}
.row-on {
  background: #d2d2d2;
  color: #217346;
  border-left: 2px solid #217346;
}
.sheet-title {
  border-bottom: 1px dotted #8b0000;
  display: flex;
  align-items: center;
  padding-right: 6px;
  font-family: 'DejaVu Sans', sans-serif;
  font-weight: bold;
  font-size: 28px;
  white-space: nowrap;
}
.dotted-box {
  border: 1px dotted #8b0000;
  box-sizing: border-box;
  margin: -1px 0 0 0;
}
.box-head {
  background: #ebf0de;
  border: 1px dotted #8b0000;
  box-sizing: border-box;
  display: flex;
  align-items: center;
  padding-right: 3px;
  font-family: 'DejaVu Sans', sans-serif;
  font-weight: bold;
  font-size: 11.5px;
  white-space: nowrap;
  margin-top: -1px;
}
.summary-head {
  font-size: 12px;
}
.label {
  display: flex;
  align-items: center;
  padding-right: 3px;
  font-family: 'DejaVu Sans', sans-serif;
  font-size: 13px;
  white-space: nowrap;
  overflow: visible;
}
.input {
  background: #fc9;
  border: 1px solid #808080;
  box-sizing: border-box;
  margin: 0 0 -1px -1px;
}
.output {
  background: #f2f2f2;
  border: 1px solid #808080;
  box-sizing: border-box;
  margin-bottom: -1px;
}
.borrower {
  display: flex;
  align-items: center;
  padding-right: 3px;
  font-family: 'DejaVu Sans', sans-serif;
  font-weight: bold;
  font-size: 12px;
  white-space: nowrap;
}
.dotted-cell {
  border: 1px dotted #8b0000;
  box-sizing: border-box;
}
.band {
  background: #ebf0de;
  border-top: 1px dotted #8b0000;
  box-sizing: border-box;
}
.thead {
  display: flex;
  align-items: center;
  justify-content: center;
  text-align: center;
  font-family: 'DejaVu Sans', sans-serif;
  font-weight: bold;
  font-size: 11.5px;
  box-sizing: border-box;
  line-height: 22px;
}
.thead-line {
  border-left: 1px solid #000;
}
.freeze {
  border-bottom: 2px solid #a6a6a6;
  margin-bottom: -2px;
}
.active-cell {
  border: 2px solid #217346;
  box-shadow: inset 0 0 0 1px #fff;
  box-sizing: border-box;
  margin: -1px 0 -1px -1px;
  position: relative;
}
.active-cell::after {
  content: '';
  position: absolute;
  left: -3px;
  bottom: -3px;
  width: 5px;
  height: 5px;
  background: #217346;
  border: 1px solid #fff;
}

/* bottom scroll */
.hscroll {
  height: 28px;
  flex: none;
  box-sizing: border-box;
  background: #e6e6e6;
  border-bottom: 1px solid #bdbdbd;
  display: flex;
  align-items: flex-start;
}
.hs-btn {
  margin-top: 5px;
  width: 18px;
  height: 19px;
  box-sizing: border-box;
  background: #fff;
  border: 1px solid #c6c6c6;
  display: flex;
  align-items: center;
  justify-content: center;
}
.hs-prev {
  margin-left: 29px;
}
.hs-next {
  margin-left: 3px;
}
.hs-track {
  margin-top: 5px;
  width: 47px;
  height: 19px;
  background: repeating-conic-gradient(#dadada 0 25%, #ececec 0 50%) 0 0 / 2px 2px;
}
.hs-thumb {
  margin-top: 5px;
  width: 641px;
  height: 19px;
  box-sizing: border-box;
  background: #fff;
  border: 1px solid #b4b4b4;
}
.hs-dots {
  width: 28px;
  height: 19px;
  margin-top: 5px;
}
.hs-plus {
  margin: 4px 0 0 826px;
  height: 20px;
}
.sheet-tab {
  margin-left: 33px;
  width: 156px;
  height: 25px;
  box-sizing: border-box;
  background: #fff;
  border: 1px solid #a6a6a6;
  border-top: 0;
  border-bottom: 2px solid #217346;
  display: flex;
  align-items: center;
  justify-content: center;
  color: #217346;
  font-weight: bold;
  font-size: 12px;
  white-space: nowrap;
  font-family: 'DejaVu Sans', sans-serif;
}
.tab-nav {
  display: flex;
  margin: 9px 0 0 39px;
  gap: 23px;
}
.tri-l,
.tri-r {
  display: block;
  width: 0;
  height: 0;
  border-top: 5px solid transparent;
  border-bottom: 5px solid transparent;
}
.tri-l {
  border-right: 5px solid #666;
}
.tri-r {
  border-left: 5px solid #666;
}
.tri-off.tri-l {
  border-right-color: #c6c6c6;
}
.tri-off.tri-r {
  border-left-color: #c6c6c6;
}

/* status */
.status {
  height: 28px;
  flex: none;
  background: #f1f1f1;
  display: flex;
  align-items: center;
  padding-left: 10px;
  font-size: 12px;
}
.zoom-pct {
  width: 41px;
}
.zoom-sign {
  width: 16px;
  text-align: center;
  font-size: 18px;
  color: #666;
  font-weight: bold;
  line-height: 18px;
}
.zoom-slider {
  width: 125px;
  height: 1px;
  background: #999;
  position: relative;
  margin: 0 0 0 1px;
}
.zoom-slider i {
  position: absolute;
  left: 59px;
  top: -8px;
  width: 6px;
  height: 17px;
  background: #707070;
}
.view-btn {
  width: 42px;
  height: 28px;
  display: flex;
  align-items: center;
  justify-content: center;
}
.view-first {
  margin-left: 2px;
}
.view-on {
  background: #c6c6c6;
}

/* taskbar */
.taskbar {
  height: 50px;
  flex: none;
  display: flex;
  align-items: stretch;
  background: linear-gradient(90deg, #233a45 0%, #21343f 55%, #1f2e40 100%);
  color: #fff;
  font-size: 14px;
}
.tb-slot {
  display: flex;
  align-items: center;
  justify-content: center;
  flex: none;
}
.notif {
  width: 72px;
  position: relative;
  padding-left: 10px;
  box-sizing: border-box;
  padding-bottom: 12px;
}
.notif-badge {
  position: absolute;
  left: 21px;
  top: 25px;
  width: 20px;
  height: 20px;
  border: 1px solid #9aa4aa;
  border-radius: 50%;
  background: #233a45;
  box-sizing: border-box;
  display: flex;
  align-items: center;
  justify-content: center;
  font-size: 13px;
}
.clock {
  width: 74px;
  flex-direction: column;
  gap: 4px;
  font-size: 14px;
  font-family: 'Open Sans', 'DejaVu Sans', sans-serif;
  line-height: 18px;
}
.eng {
  width: 52px;
  font-size: 13.5px;
}
.tray {
  width: 27px;
}
.tray30 {
  width: 30px;
}
.weather {
  width: 65px;
  justify-content: flex-end;
  padding-right: 10px;
  box-sizing: border-box;
}
.temp {
  width: 38px;
  font-size: 15px;
  white-space: nowrap;
}
.cond {
  width: 45px;
  font-size: 17px;
  margin-left: 3px;
}
.tb-space {
  flex: 1;
}
.app-ico {
  width: 61.700px;
  flex: none;
  display: flex;
  align-items: center;
  justify-content: center;
  box-sizing: border-box;
  padding-bottom: 2px;
  position: relative;
}
.app-on {
  background: #4c5d69;
  border-bottom: 3px solid #76b9ed;
}
.app-line::after {
  content: '';
  position: absolute;
  left: 6px;
  right: 6px;
  bottom: 0;
  height: 3px;
  background: #76b9ed;
}
.task-view {
  width: 64px;
}
.search {
  width: 360px;
  flex: none;
  background: #f2f2f2;
  color: #222;
  display: flex;
  align-items: center;
  box-sizing: border-box;
  padding-right: 15px;
  overflow: hidden;
}
.hill {
  margin-left: 3px;
  flex: none;
}
.search-text {
  flex: 1;
  text-align: right;
  padding-right: 16px;
  font-size: 18px;
}
.start {
  width: 60px;
  flex: none;
  background: #2e3d5a;
  display: flex;
  align-items: center;
  justify-content: center;
}
.az {
  font: bold 19px 'Liberation Sans', sans-serif;
  fill: #b4b4b4;
}
.xl {
  font: bold 14px 'Liberation Sans', sans-serif;
  fill: #fff;
}

/* overlays */
.start-tip {
  position: absolute;
  left: 1875px;
  top: 1005px;
  width: 31px;
  height: 25px;
  box-sizing: border-box;
  background: #fff;
  border: 1px solid #6b6b6b;
  box-shadow: -2px 2px 3px rgba(0, 0, 0, 0.35);
  display: flex;
  align-items: center;
  justify-content: center;
  font-size: 12px;
  color: #333;
}
.activate {
  position: absolute;
  left: 80px;
  top: 920px;
  width: 300px;
  color: rgba(120, 120, 120, 0.5);
  pointer-events: none;
}
.act-1 {
  font-size: 24px;
  line-height: 38px;
}
.act-2 {
  margin-top: 1px;
  font-size: 18px;
  line-height: 22px;
  white-space: nowrap;
}
.mostaql {
  position: absolute;
  left: 845px;
  top: 945px;
  width: 230px;
  text-align: center;
  color: rgba(150, 150, 150, 0.42);
  pointer-events: none;
  white-space: nowrap;
}
.mq-logo {
  font-family: 'DejaVu Sans', sans-serif;
  font-weight: bold;
  font-size: 66px;
  line-height: 76px;
}
.mq-url {
  font-family: 'Open Sans', sans-serif;
  font-weight: 600;
  font-size: 37px;
  line-height: 38px;
}
</style>
